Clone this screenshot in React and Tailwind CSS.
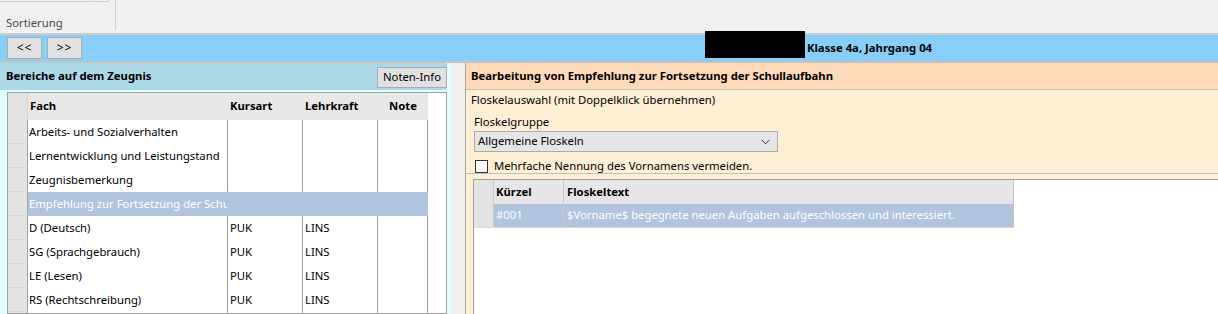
import React from "react"

const fachRows = [
  { fach: "Arbeits- und Sozialverhalten", kurs: "", lehr: "" },
  { fach: "Lernentwicklung und Leistungstand", kurs: "", lehr: "" },
  { fach: "Zeugnisbemerkung", kurs: "", lehr: "" },
  { fach: "Empfehlung zur Fortsetzung der Schullaufbahn", kurs: "", lehr: "", selected: true },
  { fach: "D (Deutsch)", kurs: "PUK", lehr: "LINS" },
  { fach: "SG (Sprachgebrauch)", kurs: "PUK", lehr: "LINS" },
  { fach: "LE (Lesen)", kurs: "PUK", lehr: "LINS" },
  { fach: "RS (Rechtschreibung)", kurs: "PUK", lehr: "LINS" },
  { fach: "", kurs: "", lehr: "" },
]

const NavButton = ({ children }) => (
  <button className="w-[35px] h-[22px] bg-[#e1e1e1] border border-[#adadad] text-[12px] leading-none tracking-[1px]">
    {children}
  </button>
)

// Left grid: subjects on the report
const FachGrid = () => (
  <div className="ml-[7px] mt-[2px] w-[440px] flex-1 border border-[#a0a0a0] bg-white overflow-hidden">
    <div className="flex h-[27px] font-bold">
      <div className="w-[20px] bg-[#e3e3e3] border-r border-[#d4d4d4]" />
      <div className="w-[200px] bg-[#e8e8e8] pl-[2px] flex items-center">Fach</div>
      <div className="w-[75px] bg-[#e8e8e8] pl-[2px] flex items-center">Kursart</div>
      <div className="w-[75px] bg-[#e8e8e8] pl-[2px] flex items-center">Lehrkraft</div>
      <div className="w-[50px] bg-[#e8e8e8] flex items-center justify-center">Note</div>
    </div>
    {fachRows.map((r, i) => (
      <div key={i} className="flex h-[24px]">
        <div className="w-[20px] bg-[#e3e3e3] border-r border-[#a0a0a0] border-b border-b-[#d8d8d8]" />
        {r.selected ? (
          <div className="w-[400px] bg-[#b0c4de] text-white flex items-center">
            <div className="w-[199px] pl-[1px] whitespace-nowrap overflow-hidden">{r.fach}</div>
          </div>
        ) : (
          <>
            <div className="w-[200px] border-r border-[#a0a0a0] pl-[1px] flex items-center whitespace-nowrap overflow-hidden">
              {r.fach}
            </div>
            <div className="w-[75px] border-r border-[#a0a0a0] pl-[2px] flex items-center">{r.kurs}</div>
            <div className="w-[75px] border-r border-[#a0a0a0] pl-[2px] flex items-center">{r.lehr}</div>
            <div className="w-[50px] border-r border-[#a0a0a0]" />
          </>
        )}
      </div>
    ))}
  </div>
)

// Right grid: phrase list
const FloskelGrid = () => (
  <div className="h-full border-l border-t border-[#a0a0a0] bg-white">
    <div className="flex h-[24px] font-bold">
      <div className="w-[20px] bg-[#e3e3e3] border-r border-[#c8c8c8]" />
      <div className="w-[70px] bg-[#e6e6e6] border-r border-[#c8c8c8] pl-[2px] flex items-center">Kürzel</div>
      <div className="w-[450px] bg-[#e6e6e6] border-r border-[#c8c8c8] pl-[3px] flex items-center">Floskeltext</div>
    </div>
    <div className="flex h-[24px] border-b border-[#dcdcdc] w-[540px]">
      <div className="w-[20px] bg-[#e3e3e3] border-r border-[#c8c8c8]" />
      <div className="w-[70px] bg-[#b0c4de] text-white border-r border-[#c8c8c8] pl-[2px] flex items-center">#001</div>
      <div className="w-[450px] bg-[#b0c4de] text-white border-r border-[#c8c8c8] pl-[3px] flex items-center whitespace-nowrap">
        $Vorname$ begegnete neuen Aufgaben aufgeschlossen und interessiert.
      </div>
    </div>
  </div>
)

export default function App() {
  return (
    <div className="relative w-[1218px] h-[314px] overflow-hidden bg-[#f0f0f0] text-[11.3px] text-black font-['Noto_Sans',sans-serif] flex flex-col">
      {/* Ribbon remains */}
      <div className="h-[33px] flex shrink-0">
        <div className="w-[115px] flex flex-col">
          <div className="flex">
            <div className="w-[93px] h-[2px] border-b border-r border-[#cfcfcf]" />
            <div className="w-[16px] h-[2px] border-b border-r border-[#cfcfcf]" />
          </div>
          <div className="mt-[13px] pl-[6px] text-[#4a4a4a] leading-[16px]">Sortierung</div>
        </div>
        <div className="h-[30px] border-l border-[#d2d2d2]" />
      </div>
      <div className="h-[2px] bg-[#cccccc] shrink-0" />

      {/* Navigation bar */}
      <div className="h-[26px] bg-[#87cefa] flex items-center pl-[7px] gap-[5px] shrink-0">
        <NavButton>&lt;&lt;</NavButton>
        <NavButton>&gt;&gt;</NavButton>
        <div className="ml-[720px] font-bold">Klasse 4a, Jahrgang 04</div>
      </div>
      <div className="h-[2px] bg-[#c2c2c2] shrink-0" />

      {/* Redacted name */}
      <div className="absolute left-[705px] top-[31px] w-[100px] h-[27px] bg-black" />

      <div className="flex flex-1 min-h-0">
        {/* Left panel */}
        <div className="w-[451px] bg-[#e0ffff] flex flex-col">
          <div className="h-[27px] mr-[4px] bg-[#add8e6] flex items-center justify-between pl-[6px]">
            <span className="font-bold">Bereiche auf dem Zeugnis</span>
            <button className="w-[70px] h-[21px] mt-[1px] bg-[#e1e1e1] border border-[#adadad]">Noten-Info</button>
          </div>
          <FachGrid />
        </div>

        {/* Splitter */}
        <div className="w-[14px]" />

        {/* Right panel */}
        <div className="flex-1 flex flex-col border-l border-[#a8a8a8] bg-[#ffefd5]">
          <div className="h-[27px] bg-[#ffdab9] border-b border-[#c0c0c0] flex items-center pl-[5px] font-bold">
            Bearbeitung von Empfehlung zur Fortsetzung der Schullaufbahn
          </div>
          <div className="h-[84px] border-b border-[#c0c0c0] flex flex-col">
            <div className="h-[20px] pl-[5px] flex items-center">Floskelauswahl (mit Doppelklick übernehmen)</div>
            <div className="mt-[4px] h-[17px] pl-[8px] flex items-center">Floskelgruppe</div>
            <div className="ml-[8px] w-[304px] h-[21px] bg-[#e5e5e5] border border-[#acacac] flex items-center justify-between pl-[3px] pr-[7px]">
              <span>Allgemeine Floskeln</span>
              <svg width="9" height="6" viewBox="0 0 9 6" fill="none">
                <path d="M0.5 0.8 L4.5 4.8 L8.5 0.8" stroke="#333" strokeWidth="1" />
              </svg>
            </div>
            <div className="mt-[8px] ml-[9px] h-[13px] flex items-center gap-[6px]">
              <div className="w-[13px] h-[13px] bg-white border border-[#333]" />
              <span>Mehrfache Nennung des Vornamens vermeiden.</span>
            </div>
          </div>
          <div className="flex-1 pt-[5px] pl-[7px]">
            <FloskelGrid />
          </div>
        </div>
      </div>
    </div>
  )
}
